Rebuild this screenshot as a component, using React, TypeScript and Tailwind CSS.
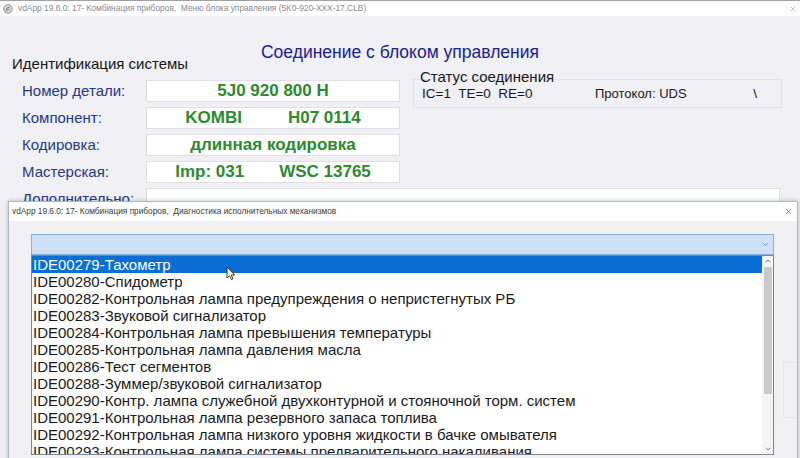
import { ChevronDown, ChevronUp, X } from 'lucide-react';

const actuators = [
  'IDE00279-Тахометр',
  'IDE00280-Спидометр',
  'IDE00282-Контрольная лампа предупреждения о непристегнутых РБ',
  'IDE00283-Звуковой сигнализатор',
  'IDE00284-Контрольная лампа превышения температуры',
  'IDE00285-Контрольная лампа давления масла',
  'IDE00286-Тест сегментов',
  'IDE00288-Зуммер/звуковой сигнализатор',
  'IDE00290-Контр. лампа служебной двухконтурной и стояночной торм. систем',
  'IDE00291-Контрольная лампа резервного запаса топлива',
  'IDE00292-Контрольная лампа низкого уровня жидкости в бачке омывателя',
  'IDE00293-Контрольная лампа системы предварительного накаливания',
];

function IdRow({ label, children }: { label: string; children?: React.ReactNode }) {
  return (
    <div className="flex h-[22px] items-center">
      <div className="w-[134px] pl-[10px] text-[15px] leading-[18px] text-[#1f3a86]">{label}</div>
      <div className="flex h-[22px] w-[254px] items-center justify-center border border-[#dedee4] bg-white text-[17px] font-bold leading-[20px] text-[#2c8a2e]">
        {children}
      </div>
    </div>
  );
}

export default function App() {
  return (
    <div className="relative h-[458px] w-[800px] overflow-hidden bg-[#efeff4] font-['Liberation_Sans',Arial,sans-serif]">
      {/* Main window title bar */}
      <div className="flex h-[16px] items-center gap-[5px] border-t border-[#a0a0a0] bg-white pl-[3px] pr-[3px]">
        <svg width="10" height="10" viewBox="0 0 10 10">
          <circle cx="5" cy="5" r="4.3" fill="#d9d9d9" stroke="#8a8a8a" strokeWidth="0.9" />
          <path d="M3 6.5 Q3.5 3 6.8 3.2 M4.2 6.8 Q5 5 6.6 5" stroke="#6c6c6c" strokeWidth="0.9" fill="none" />
        </svg>
        <span className="whitespace-pre text-[8.4px] text-[#8b8b8b]">
          vdApp 19.6.0: 17- Комбинация приборов,  Меню блока управления (5K0-920-XXX-17.CLB)
        </span>
        <X className="ml-auto h-[8px] w-[8px] text-[#888]" strokeWidth={1.5} />
      </div>

      {/* Main window body */}
      <div className="px-[12px]">
        <h1 className="mt-[25px] text-center text-[17.5px] leading-[22px] text-[#1b2290]">
          Соединение с блоком управления
        </h1>
        <div className="-mt-[8px] flex">
          <div className="w-[388px]">
            <div className="text-[15px] leading-[17px] text-[#161616]">Идентификация системы</div>
            <div className="mt-[8px] flex flex-col gap-[5px]">
              <IdRow label="Номер детали:">5J0 920 800 H</IdRow>
              <IdRow label="Компонент:">
                <div className="flex gap-[46px]">
                  <span>KOMBI</span>
                  <span>H07 0114</span>
                </div>
              </IdRow>
              <IdRow label="Кодировка:">длинная кодировка</IdRow>
              <IdRow label="Мастерская:">
                <div className="flex gap-[35px]">
                  <span>Imp: 031</span>
                  <span>WSC 13765</span>
                </div>
              </IdRow>
            </div>
          </div>

          {/* Connection status group */}
          <div className="ml-[13px] w-[369px]">
            <div className="mt-[15px] pl-[7px] text-[15px] leading-[14px] text-[#1a1a1a]">Статус соединения</div>
            <div className="-mt-[5px] flex h-[29px] items-center border border-[#e1e1e7] pl-[8px] pt-[1px] text-[13.5px] text-[#1a1a1a]">
              <span className="w-[173px] whitespace-pre">IC=1  TE=0  RE=0</span>
              <span className="text-[13px]">Протокол: UDS</span>
              <span className="ml-auto pr-[24px]">\</span>
            </div>
          </div>
        </div>
        <div className="mt-[5px] flex h-[22px] items-center">
          <div className="w-[134px] pl-[10px] text-[15px] leading-[18px] text-[#1f3a86]">Дополнительно:</div>
          <div className="h-[22px] w-[634px] border border-[#dedee4] bg-white" />
        </div>
      </div>

      {/* Actuator diagnostics dialog */}
      <div className="absolute left-[8px] top-[201px] h-[262px] w-[790px] border border-[#aab8c8] bg-[#f0f0f2] shadow-[0_0_4px_rgba(0,0,0,0.25)]">
        <div className="flex h-[19px] items-center bg-white pl-[3px] pr-[4px]">
          <span className="whitespace-pre text-[8.3px] text-[#3a3a3a]">
            vdApp 19.6.0: 17- Комбинация приборов,  Диагностика исполнительных механизмов
          </span>
          <X className="ml-auto h-[9px] w-[9px] text-[#444]" strokeWidth={1.6} />
        </div>
        <div className="flex pl-[22px] pt-[13px]">
          <div className="w-[743px]">
            <div className="flex h-[21px] items-center justify-end border border-[#89b0dc] bg-[#cde1f6] pr-[3px]">
              <ChevronDown className="h-[9px] w-[9px] text-[#6a7d92]" strokeWidth={2} />
            </div>
            <div className="flex h-[200px] border border-[#7b8795] bg-white">
              <div className="flex-1 overflow-hidden">
                {actuators.map((item, i) => (
                  <div
                    key={item}
                    className={
                      i === 0
                        ? 'h-[17px] whitespace-nowrap bg-[#0a6fd5] pl-[1px] text-[15px] leading-[17px] text-white'
                        : 'h-[17px] whitespace-nowrap pl-[1px] text-[15px] leading-[17px] text-[#1a1a1a]'
                    }
                  >
                    {item}
                  </div>
                ))}
              </div>
              <div className="flex w-[11px] flex-col items-center bg-[#f4f4f4]">
                <ChevronUp className="mt-[1px] h-[8px] w-[8px] text-[#606060]" strokeWidth={2.5} />
                <div className="mt-[2px] h-[127px] w-[8px] bg-[#c9c9c9]" />
                <ChevronDown className="mt-auto mb-[1px] h-[8px] w-[8px] text-[#606060]" strokeWidth={2.5} />
              </div>
            </div>
          </div>
          <div className="ml-[9px] mt-[128px] h-[56px] w-[14px] border border-r-0 border-[#e4e4e8]" />
        </div>
      </div>

      {/* Mouse pointer over the selected item */}
      <svg className="absolute left-[226px] top-[266px]" width="10" height="15" viewBox="0 0 10 15">
        <path d="M1 1 L1 12 L3.6 9.6 L5.4 13.6 L7 12.9 L5.3 9 L8.7 9 Z" fill="#fff" stroke="#222" strokeWidth="0.9" />
      </svg>
    </div>
  );
}
